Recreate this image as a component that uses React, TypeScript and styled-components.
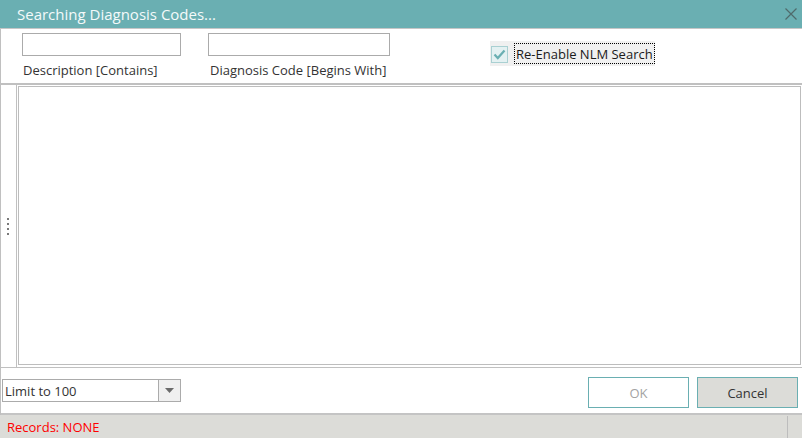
import { createGlobalStyle } from 'styled-components';
import styled from 'styled-components';

const GlobalStyle = createGlobalStyle`
  *, *::before, *::after {
    box-sizing: border-box;
  }

  html, body {
    margin: 0;
    padding: 0;
    background: #ffffff;
    font-family: 'Open Sans', 'Noto Sans', sans-serif;
  }
`;

const Window = styled.div`
  width: 802px;
  height: 438px;
  display: flex;
  flex-direction: column;
  overflow: hidden;
  background: #ffffff;
`;

const TitleBar = styled.div`
  height: 29px;
  flex: none;
  background: #6aafb2;
  border-bottom: 1px solid #c6c6c6;
  display: flex;
  align-items: center;
  justify-content: space-between;
  padding: 0 3px 0 17px;
  color: #f4fafa;
  font-size: 15px;
`;

const CloseButton = styled.div`
  width: 16px;
  height: 28px;
  display: flex;
  align-items: center;
  justify-content: center;
`;

const Body = styled.div`
  flex: 1;
  display: flex;
  flex-direction: column;
  border-left: 1px solid #c0c0c0;
`;

const FilterBar = styled.div`
  height: 56px;
  flex: none;
  display: flex;
  align-items: flex-start;
  padding: 4px 0 0 21px;
  border-bottom: 2px solid #c0c0c0;
`;

const Field = styled.div<{ $width: number; $gap: number }>`
  width: ${(p) => p.$width}px;
  margin-right: ${(p) => p.$gap}px;
  display: flex;
  flex-direction: column;
`;

const TextInput = styled.input`
  width: 100%;
  height: 23px;
  border: 1px solid #ababab;
  background: #ffffff;
  outline: none;
  padding: 0 3px;
  font: inherit;
  font-size: 13px;
`;

const FieldLabel = styled.label<{ $indent: number }>`
  margin-top: 6px;
  padding-left: ${(p) => p.$indent}px;
  font-size: 13px;
  line-height: 17px;
  color: #333333;
  white-space: nowrap;
`;

const CheckGroup = styled.div`
  margin-top: 8px;
  height: 25px;
  width: 165px;
  background: #f0f0f0;
  display: flex;
  align-items: center;
  padding-left: 1px;
  gap: 6px;
`;

const CheckBox = styled.div`
  width: 17px;
  height: 17px;
  border: 1px solid #a9d0d2;
  background: #e4f1f2;
  display: flex;
  align-items: center;
  justify-content: center;
  margin-top: 2px;
`;

const CheckLabel = styled.span`
  height: 21px;
  border: 1px dotted #000000;
  padding: 0 1px;
  display: flex;
  align-items: center;
  font-size: 13px;
  color: #1a1a1a;
  white-space: nowrap;
`;

const MainArea = styled.div`
  flex: 1;
  display: flex;
  padding-top: 1px;
  border-bottom: 1px solid #c0c0c0;
`;

const Splitter = styled.div`
  width: 16px;
  flex: none;
  margin-top: -1px;
  border-right: 1px solid #c0c0c0;
  display: flex;
  flex-direction: column;
  align-items: center;
  justify-content: center;
  gap: 3px;
`;

const Grip = styled.span`
  width: 2px;
  height: 2px;
  background: #7a7a7a;
  margin-right: 1px;
`;

const Grid = styled.div`
  flex: 1;
  margin: 0 1px 2px 1px;
  border: 1px solid #bdbdbd;
  background: #ffffff;
`;

const Footer = styled.div`
  height: 47px;
  flex: none;
  display: flex;
  align-items: flex-start;
  justify-content: space-between;
  padding: 9px 4px 0 1px;
  border-bottom: 2px solid #c4c4c4;
`;

const Combo = styled.div`
  width: 179px;
  height: 23px;
  border: 1px solid #ababab;
  display: flex;
  align-items: stretch;
  margin-top: 2px;
`;

const ComboText = styled.div`
  flex: 1;
  display: flex;
  align-items: center;
  padding-left: 2px;
  font-size: 13px;
  color: #333333;
`;

const ComboButton = styled.div`
  width: 22px;
  border-left: 1px solid #ababab;
  background: #f0f0f0;
  display: flex;
  align-items: center;
  justify-content: center;
`;

const Buttons = styled.div`
  display: flex;
  gap: 8px;
`;

const Button = styled.button<{ $primary?: boolean }>`
  width: 101px;
  height: 31px;
  border: 1px solid #6aafb2;
  background: ${(p) => (p.$primary ? '#ffffff' : '#dcdcd8')};
  color: ${(p) => (p.$primary ? '#a3a3a3' : '#333333')};
  font-family: inherit;
  font-size: 13px;
  padding: 0;
`;

const StatusBar = styled.div`
  height: 23px;
  flex: none;
  background: #dcdcd8;
  display: flex;
  align-items: stretch;
`;

const StatusText = styled.div`
  flex: 1;
  display: flex;
  align-items: center;
  padding-left: 7px;
  font-size: 13px;
  color: #ff0000;
`;

const StatusGrip = styled.div`
  width: 15px;
  margin-top: 1px;
  border-left: 1px solid #bdbdbd;
`;

export default function App() {
  return (
    <>
      <GlobalStyle />
      <Window>
        <TitleBar>
          <span>Searching Diagnosis Codes...</span>
          <CloseButton>
            <svg width="12" height="12" viewBox="0 0 12 12">
              <path d="M0.5 0.5 L11.5 11.5 M11.5 0.5 L0.5 11.5" stroke="#4f6a6b" strokeWidth="1.2" fill="none" />
            </svg>
          </CloseButton>
        </TitleBar>
        <Body>
          <FilterBar>
            <Field $width={159} $gap={27}>
              <TextInput />
              <FieldLabel $indent={1}>Description [Contains]</FieldLabel>
            </Field>
            <Field $width={182} $gap={100}>
              <TextInput />
              <FieldLabel $indent={2}>Diagnosis Code [Begins With]</FieldLabel>
            </Field>
            <CheckGroup>
              <CheckBox>
                <svg width="13" height="11" viewBox="0 0 13 11">
                  <path d="M1.5 5.5 L4.8 9 L11.5 1.5" stroke="#6aafb2" strokeWidth="2.2" fill="none" />
                </svg>
              </CheckBox>
              <CheckLabel>Re-Enable NLM Search</CheckLabel>
            </CheckGroup>
          </FilterBar>
          <MainArea>
            <Splitter>
              <Grip />
              <Grip />
              <Grip />
              <Grip />
            </Splitter>
            <Grid />
          </MainArea>
          <Footer>
            <Combo>
              <ComboText>Limit to 100</ComboText>
              <ComboButton>
                <svg width="9" height="5" viewBox="0 0 9 5">
                  <path d="M0 0 L9 0 L4.5 5 Z" fill="#6b6b6b" />
                </svg>
              </ComboButton>
            </Combo>
            <Buttons>
              <Button $primary>OK</Button>
              <Button>Cancel</Button>
            </Buttons>
          </Footer>
        </Body>
        <StatusBar>
          <StatusText>Records: NONE</StatusText>
          <StatusGrip />
        </StatusBar>
      </Window>
    </>
  );
}
